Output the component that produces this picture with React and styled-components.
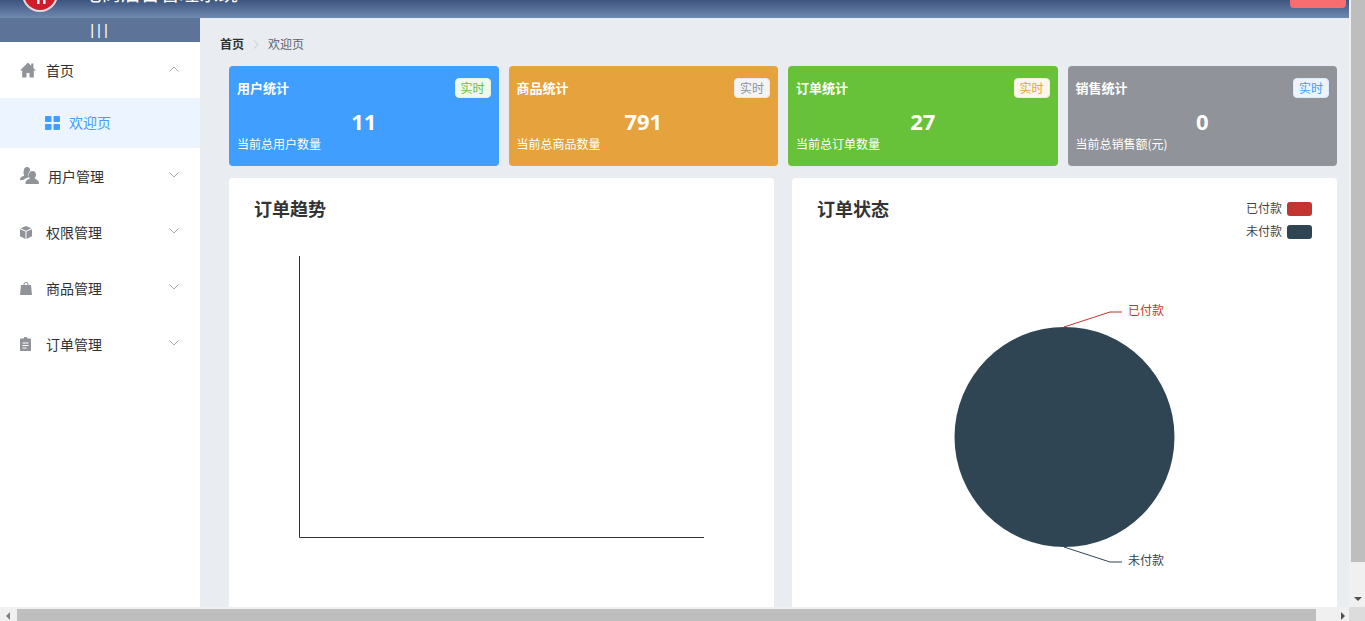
import React from "react";
import styled, { createGlobalStyle } from "styled-components";

const GlobalStyle = createGlobalStyle`
  html, body {
    margin: 0;
    padding: 0;
    overflow: hidden;
    background: #fff;
  }
  body {
    font-family: "Noto Sans CJK SC", "Noto Sans", sans-serif;
  }
  * {
    box-sizing: border-box;
  }
`;

const Frame = styled.div`
  width: 1365px;
  height: 621px;
  display: grid;
  grid-template-columns: 1349px 16px;
  grid-template-rows: 607px 14px;
  overflow: hidden;
`;

const Viewport = styled.div`
  overflow: hidden;
`;

// the page is scrolled down 42px in the screenshot
const Page = styled.div`
  margin-top: -42px;
`;

const Header = styled.header`
  height: 60px;
  display: flex;
  align-items: center;
  justify-content: space-between;
  padding: 0 3px 0 22px;
  background: linear-gradient(to bottom, #1d3560 0, #3d557f 42px, #7089af 60px);
`;

const Brand = styled.div`
  display: flex;
  align-items: center;
  gap: 24px;
  padding-top: 12px;
`;

const BrandName = styled.span`
  margin-top: -2px;
  font-size: 19.5px;
  line-height: 36px;
  color: #fff;
`;

const LogoutButton = styled.button`
  width: 56px;
  height: 40px;
  border: 0;
  border-radius: 4px;
  background: #f96c70;
  color: #fff;
  font-size: 14px;
  font-family: inherit;
`;

const Body = styled.div`
  height: 589px;
  display: flex;
`;

const Sidebar = styled.aside`
  width: 200px;
  flex: none;
  background: #fff;
`;

const Toggle = styled.div`
  height: 24px;
  padding-left: 1px;
  background: #5d7498;
  color: #fff;
  font-family: "Liberation Sans", sans-serif;
  font-size: 15px;
  line-height: 23px;
  letter-spacing: 3px;
  text-align: center;
`;

const MenuRow = styled.div`
  height: 56px;
  display: flex;
  align-items: center;
  padding-left: 20px;
  font-size: 14px;
  color: #303133;
`;

const IconSlot = styled.span`
  width: ${({ $wide }) => ($wide ? "28px" : "26px")};
  flex: none;
  display: flex;
  align-items: center;
`;

const Chevron = styled.svg`
  width: 10px;
  height: 6px;
  margin-left: auto;
  margin-right: 21px;
  margin-top: -2px;
  fill: none;
  stroke: #a8abb2;
  stroke-width: 1;
`;

const SubRow = styled.div`
  height: 50px;
  display: flex;
  align-items: center;
  gap: 9px;
  padding-left: 45px;
  background: #ecf5ff;
  color: #409eff;
  font-size: 14px;
`;

const SubLabel = styled.span`
  margin-top: -2px;
`;

const Main = styled.main`
  flex: 1;
  min-width: 0;
  background: #e9edf2;
  padding: 20px 12px 0 20px;
  overflow: hidden;
`;

const Breadcrumb = styled.nav`
  display: flex;
  align-items: center;
  height: 12px;
  font-size: 12px;
  line-height: 12px;
  color: #606266;
`;

const CrumbRoot = styled.span`
  font-weight: 700;
  color: #303133;
`;

const CrumbSep = styled.svg`
  width: 6px;
  height: 9px;
  margin: 0 9px 0 9px;
  fill: none;
  stroke: #c0c4cc;
  stroke-width: 1;
`;

const Content = styled.div`
  padding-left: 9px;
`;

const StatRow = styled.div`
  display: grid;
  grid-template-columns: repeat(4, 1fr);
  gap: 10px;
  margin-top: 16px;
`;

const StatCard = styled.section`
  height: 100px;
  padding: 12px 8px 0;
  border-radius: 4px;
  background: ${({ $bg }) => $bg};
  color: #fff;
`;

const StatHead = styled.div`
  display: flex;
  align-items: center;
  justify-content: space-between;
  height: 20px;
`;

const StatTitle = styled.span`
  margin-bottom: 2px;
  font-size: 13px;
  font-weight: 700;
`;

const Tag = styled.span`
  width: 36px;
  height: 20px;
  border-radius: 4px;
  border: 1px solid ${({ $border }) => $border};
  background: ${({ $bg }) => $bg};
  color: ${({ $fg }) => $fg};
  font-size: 12px;
  line-height: 18px;
  text-align: center;
`;

const StatValue = styled.div`
  margin-top: 8px;
  height: 31px;
  font-family: "Open Sans", sans-serif;
  font-size: 22px;
  font-weight: 700;
  line-height: 30px;
  text-align: center;
`;

const StatNote = styled.div`
  font-size: 12px;
  line-height: 14px;
`;

const ChartRow = styled.div`
  display: grid;
  grid-template-columns: 1fr 1fr;
  gap: 18px;
  margin-top: 12px;
`;

const ChartCard = styled.section`
  height: 440px;
  padding: 20px 25px 0;
  border-radius: 4px;
  background: #fff;
`;

const ChartHead = styled.div`
  height: 45px;
  display: flex;
  justify-content: space-between;
  align-items: flex-start;
`;

const ChartTitle = styled.h3`
  margin: -2px 0 0;
  font-size: 18px;
  font-weight: 700;
  line-height: 24px;
  color: #333;
`;

const Legend = styled.ul`
  margin: 4px 0 0;
  padding: 0;
  list-style: none;
  display: flex;
  flex-direction: column;
  gap: 9px;
`;

const LegendItem = styled.li`
  display: flex;
  align-items: flex-start;
  gap: 5px;
  height: 14px;
  font-size: 12px;
  line-height: 12px;
  color: #444;
`;

const Swatch = styled.i`
  width: 25px;
  height: 14px;
  border-radius: 3px;
  background: ${({ $color }) => $color};
`;

const ChartSvg = styled.svg`
  display: block;
  width: 495px;
  height: 340px;
`;

const PieLabel = styled.text`
  font-size: 12px;
  font-family: "Noto Sans CJK SC", sans-serif;
`;

const BarY = styled.div`
  grid-column: 2;
  grid-row: 1;
  position: relative;
  background: #f0f0f0;
  padding-left: 2px;
`;

const ThumbY = styled.div`
  height: 562px;
  background: #bebebe;
`;

const ArrowDown = styled.span`
  position: absolute;
  left: 5px;
  bottom: 6px;
  border-style: solid;
  border-width: 4px 4px 0;
  border-color: #505050 transparent transparent;
`;

const BarX = styled.div`
  grid-column: 1;
  grid-row: 2;
  display: flex;
  align-items: flex-end;
  background: #f0f0f0;
  padding-left: 17px;
  position: relative;
`;

const ThumbX = styled.div`
  width: 1299px;
  height: 12px;
  background: #bebebe;
`;

const ArrowSide = styled.span`
  position: absolute;
  top: 5px;
  ${({ $dir }) => ($dir === "left" ? "left: 6px;" : "right: 4px;")}
  border-style: solid;
  border-width: ${({ $dir }) => ($dir === "left" ? "4px 4px 4px 0" : "4px 0 4px 4px")};
  border-color: transparent ${({ $dir }) => ($dir === "left" ? "#808080" : "transparent")} transparent ${({ $dir }) => ($dir === "left" ? "transparent" : "#505050")};
`;

const Corner = styled.div`
  background: #dcdcdc;
`;

const IconSvg = styled.svg`
  display: block;
  fill: #909399;
`;

const HomeIcon = () => (
  <IconSvg width="16" height="16" viewBox="0 0 16 16">
    <path d="M8 .5 0 8.500h2.200V15.500h4.300V11h3v4.500h4.300V8.500H16L13.400 5.900V1.500h-2.200v2.200z" />
  </IconSvg>
);

const UsersIcon = () => (
  <IconSvg width="19" height="18" viewBox="0 0 19 18">
    <path d="M7 0c2 0 3 1.300 3 3 0 .4 0 .8-.1 1.100C8.800 5 8.300 6.500 8.400 8c.1.900.4 1.600.8 2.100L6.500 11 3 13H0c0-2 1-3 3.500-3.900.6-.2.800-.7.500-1.200C3.400 7 3.500 5.500 3.700 4 4 1.500 5 0 7 0z" />
    <path d="M12.500 4c2.200 0 3.500 1.600 3.500 3.700 0 1.300-.5 2.400-1.200 3.100-.3.400-.2.800.3 1 2 .8 3.400 1.600 3.900 4.200.1.500 0 1-.6 1H6c-.6 0-.7-.5-.6-1 .5-2.600 1.900-3.400 3.900-4.200.5-.2.600-.6.300-1C8.900 10.100 8.800 9 8.800 7.700 9 5.600 10.300 4 12.500 4z" />
  </IconSvg>
);

const CubeIcon = () => (
  <IconSvg width="12" height="13" viewBox="0 0 12 13">
    <path d="M6 0 .6 2.300 6 4.700l5.400-2.400zM0 3.300v6.900L5.500 13V5.600zM12 3.300 6.500 5.600V13L12 10.200z" />
  </IconSvg>
);

const BagIcon = () => (
  <IconSvg width="12" height="13" viewBox="0 0 12 13">
    <path fillRule="evenodd" d="M3.500 3V2.500C3.500 1 4.500 0 6 0s2.500 1 2.500 2.500V3H11l1 10H0L1 3zm1 0h3v-.5C7.500 1.600 6.900 1 6 1s-1.500.6-1.500 1.500z" />
  </IconSvg>
);

const ClipboardIcon = () => (
  <IconSvg width="11" height="14" viewBox="0 0 11 14">
    <path fillRule="evenodd" d="M3.500 1.500 4.300 0h2.400l.8 1.500H10c.6 0 1 .4 1 1V13c0 .6-.4 1-1 1H1c-.6 0-1-.4-1-1V2.500c0-.6.4-1 1-1zM2.500 5.500v1h6v-1zm0 2.500v1h6V8zm0 2.500v1h4v-1z" />
  </IconSvg>
);

const GridSvg = styled.svg`
  display: block;
  fill: #409eff;
`;

const GridIcon = () => (
  <GridSvg width="15" height="14" viewBox="0 0 15 14">
    <rect width="6.500" height="6" rx="1" />
    <rect x="8.500" width="6.500" height="6" rx="1" />
    <rect y="8" width="6.500" height="6" rx="1" />
    <rect x="8.500" y="8" width="6.500" height="6" rx="1" />
  </GridSvg>
);

const Logo = () => (
  <svg width="36" height="36" viewBox="0 0 36 36" style={{ display: "block" }}>
    <circle cx="18" cy="18" r="18" fill="#e4dcdc" />
    <circle cx="18" cy="18" r="16" fill="#d01c2b" />
    <path d="M15 6h2.500v22H15zM21 6h2.500v22H21z" fill="#fff" />
  </svg>
);

const ChevronIcon = ({ up }) => (
  <Chevron viewBox="0 0 10 6">
    <path d={up ? "M.5 5.500 5 1l4.500 4.500" : "M.5.500 5 5 9.500.500"} />
  </Chevron>
);

const menus = [
  { title: "用户管理", icon: <UsersIcon />, wide: true },
  { title: "权限管理", icon: <CubeIcon /> },
  { title: "商品管理", icon: <BagIcon /> },
  { title: "订单管理", icon: <ClipboardIcon /> },
];

const stats = [
  { title: "用户统计", value: 11, note: "当前总用户数量", bg: "#409eff", tag: ["#f0f9eb", "#e1f3d8", "#67c23a"] },
  { title: "商品统计", value: 791, note: "当前总商品数量", bg: "#e6a23c", tag: ["#f4f4f5", "#e9e9eb", "#909399"] },
  { title: "订单统计", value: 27, note: "当前总订单数量", bg: "#67c23a", tag: ["#fdf6ec", "#faecd8", "#e6a23c"] },
  { title: "销售统计", value: 0, note: "当前总销售额(元)", bg: "#909399", tag: ["#ecf5ff", "#d9ecff", "#409eff"] },
];

export default function App() {
  return (
    <>
      <GlobalStyle />
      <Frame>
        <Viewport>
          <Page>
            <Header>
              <Brand>
                <Logo />
                <BrandName>电商后台管理系统</BrandName>
              </Brand>
              <LogoutButton>退出</LogoutButton>
            </Header>
            <Body>
              <Sidebar>
                <Toggle>|||</Toggle>
                <MenuRow>
                  <IconSlot><HomeIcon /></IconSlot>
                  首页
                  <ChevronIcon up />
                </MenuRow>
                <SubRow>
                  <GridIcon />
                  <SubLabel>欢迎页</SubLabel>
                </SubRow>
                {menus.map((m) => (
                  <MenuRow key={m.title}>
                    <IconSlot $wide={m.wide}>{m.icon}</IconSlot>
                    {m.title}
                    <ChevronIcon />
                  </MenuRow>
                ))}
              </Sidebar>
              <Main>
                <Breadcrumb>
                  <CrumbRoot>首页</CrumbRoot>
                  <CrumbSep viewBox="0 0 6 9">
                    <path d="M1 .5 5 4.500 1 8.500" />
                  </CrumbSep>
                  欢迎页
                </Breadcrumb>
                <Content>
                  <StatRow>
                    {stats.map((s) => (
                      <StatCard key={s.title} $bg={s.bg}>
                        <StatHead>
                          <StatTitle>{s.title}</StatTitle>
                          <Tag $bg={s.tag[0]} $border={s.tag[1]} $fg={s.tag[2]}>实时</Tag>
                        </StatHead>
                        <StatValue>{s.value}</StatValue>
                        <StatNote>{s.note}</StatNote>
                      </StatCard>
                    ))}
                  </StatRow>
                  <ChartRow>
                    <ChartCard>
                      <ChartHead>
                        <ChartTitle>订单趋势</ChartTitle>
                      </ChartHead>
                      <ChartSvg viewBox="0 0 495 340">
                        <path d="M45.500 13V294.500H450" fill="none" stroke="#333" />
                      </ChartSvg>
                    </ChartCard>
                    <ChartCard>
                      <ChartHead>
                        <ChartTitle>订单状态</ChartTitle>
                        <Legend>
                          <LegendItem>已付款<Swatch $color="#c23531" /></LegendItem>
                          <LegendItem>未付款<Swatch $color="#2f4554" /></LegendItem>
                        </Legend>
                      </ChartHead>
                      <ChartSvg viewBox="0 0 495 340">
                        <circle cx="247.500" cy="194" r="110" fill="#2f4554" />
                        <path d="M247 84 293 69H305" fill="none" stroke="#c23531" />
                        <path d="M247 304 293 319H305" fill="none" stroke="#2f4554" />
                        <PieLabel x="311" y="72" fill="#c23531">已付款</PieLabel>
                        <PieLabel x="311" y="322" fill="#2f4554">未付款</PieLabel>
                      </ChartSvg>
                    </ChartCard>
                  </ChartRow>
                </Content>
              </Main>
            </Body>
          </Page>
        </Viewport>
        <BarY>
          <ThumbY />
          <ArrowDown />
        </BarY>
        <BarX>
          <ArrowSide $dir="left" />
          <ThumbX />
          <ArrowSide $dir="right" />
        </BarX>
        <Corner />
      </Frame>
    </>
  );
}
